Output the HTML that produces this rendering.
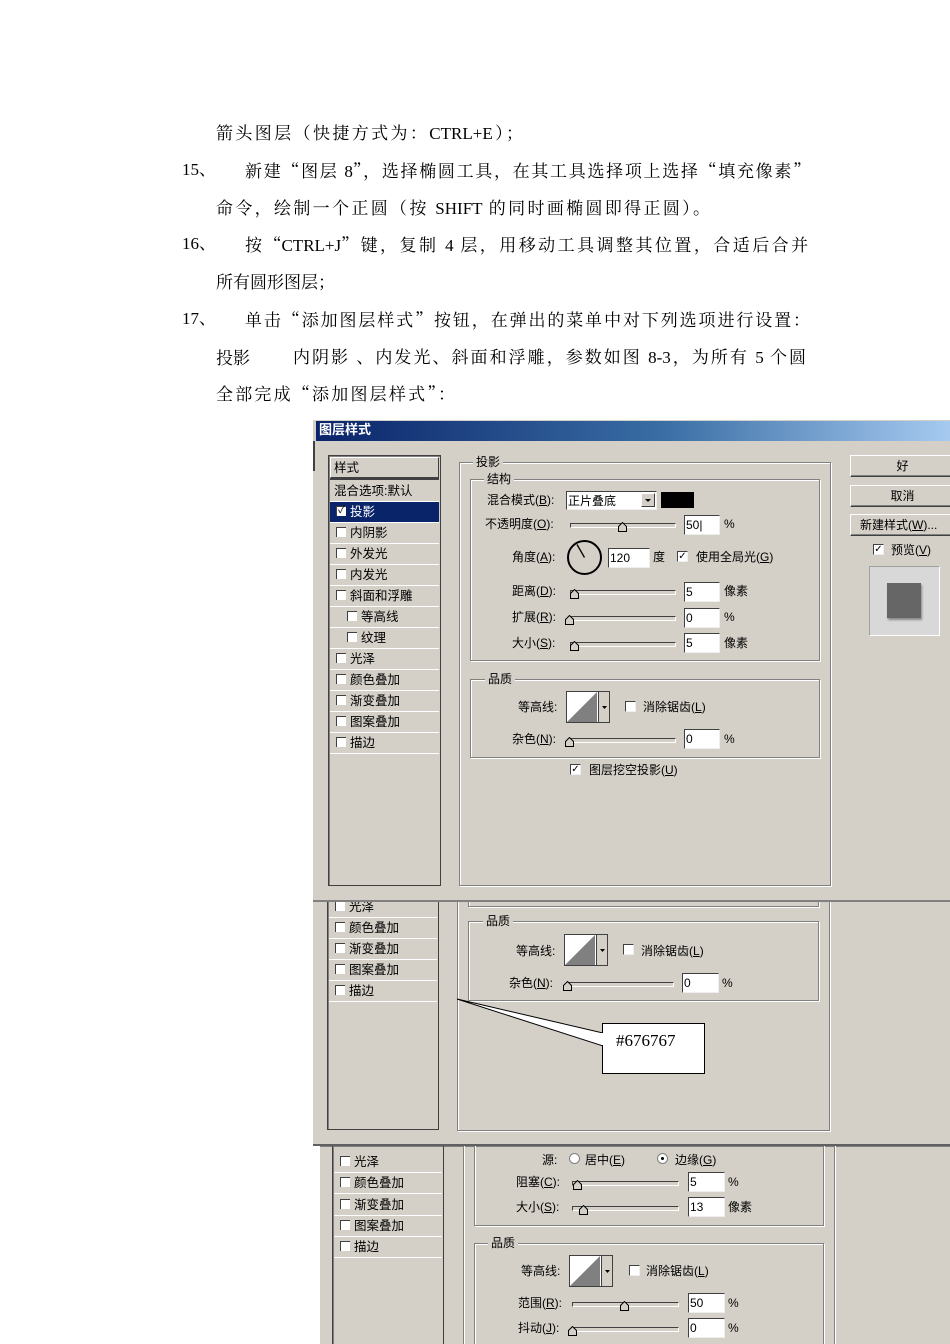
<!DOCTYPE html>
<html style="overflow:hidden;height:1344px"><head><meta charset="utf-8"><style>
*{margin:0;padding:0;box-sizing:border-box}
body{width:950px;height:1344px;background:#fff;position:relative;overflow:hidden;font-family:"Liberation Serif","Noto Serif CJK SC",serif}
.p{position:absolute;font-size:17px;color:#000;white-space:nowrap;line-height:20px}
.j{text-align:justify;text-align-last:justify;white-space:normal;overflow:hidden;height:22px}
.q{font-family:"Noto Serif CJK SC",serif}
.a{position:absolute}
.t{position:absolute;font-family:"Liberation Sans","Noto Sans CJK SC",sans-serif;font-size:12px;line-height:14px;color:#000;white-space:nowrap}
.bg{position:absolute;background:#d4d0c8}
.grp{position:absolute;border:1px solid #808080;box-shadow:1px 1px 0 #fff, inset 1px 1px 0 #fff}
.gl{position:absolute;background:#d4d0c8;padding:0 3px;font-family:"Liberation Sans","Noto Sans CJK SC",sans-serif;font-size:12px;line-height:14px}
.lst{position:absolute;border:1px solid #404040;box-shadow:inset 1px 1px 0 #808080}
.it{position:absolute;left:2px;right:1px;height:21px;border-bottom:1px solid #fff;font-family:"Liberation Sans","Noto Sans CJK SC",sans-serif;font-size:12.5px;line-height:20px;padding-left:20px}
.it i{position:absolute;left:6px;top:4px;width:10px;height:10px;background:#fff;border-top:1px solid #404040;border-left:1px solid #404040;font-style:normal}
.cb{position:absolute;width:11px;height:11px;background:#fff;border-top:1px solid #404040;border-left:1px solid #404040;border-right:1px solid #eee;border-bottom:1px solid #eee;font-size:10px;line-height:9px;text-align:center;font-family:"DejaVu Sans",sans-serif}
.in{position:absolute;height:20px;background:#fff;border-top:1px solid #404040;border-left:1px solid #404040;border-right:1px solid #eee;border-bottom:1px solid #eee;font-family:"Liberation Sans",sans-serif;font-size:12px;line-height:18px;padding-left:1px}
.sl{position:absolute;height:5px;border:1px solid #404040;border-right-color:#fff;border-bottom-color:#fff;background:#d4d0c8}
.th{position:absolute;width:9px;height:10px}
.btn{position:absolute;height:22px;border:1px solid #fff;border-right-color:#404040;border-bottom-color:#404040;box-shadow:inset -1px -1px 0 #808080;text-align:center;font-family:"Liberation Sans","Noto Sans CJK SC",sans-serif;font-size:12px;line-height:20px}
.cont{position:absolute;width:44px;height:32px;border:1px solid #404040;background:#fff}
u{text-decoration:underline}
</style></head><body>

<div class="p j" style="left:216px;top:122px;width:307px">箭头图层<span class="q">（</span>快捷方式为<span class="q">：</span>CTRL+E<span class="q">）；</span></div>
<div class="p" style="left:182px;top:160px">15、</div>
<div class="p j" style="left:245px;top:160px;width:565px">新建<span class="q">“</span>图层 8<span class="q">”，</span>选择椭圆工具<span class="q">，</span>在其工具选择项上选择<span class="q">“</span>填充像素<span class="q">”</span></div>
<div class="p j" style="left:216px;top:197px;width:494px">命令<span class="q">，</span>绘制一个正圆<span class="q">（</span>按 SHIFT 的同时画椭圆即得正圆<span class="q">）。</span></div>
<div class="p" style="left:182px;top:234px">16、</div>
<div class="p j" style="left:245px;top:234px;width:563px">按<span class="q">“</span>CTRL+J<span class="q">”</span>键<span class="q">，</span>复制 4 层<span class="q">，</span>用移动工具调整其位置<span class="q">，</span>合适后合并</div>
<div class="p j" style="left:216px;top:271px;width:119px">所有圆形图层<span class="q">；</span></div>
<div class="p" style="left:182px;top:309px">17、</div>
<div class="p j" style="left:245px;top:309px;width:565px">单击<span class="q">“</span>添加图层样式<span class="q">”</span>按钮<span class="q">，</span>在弹出的菜单中对下列选项进行设置<span class="q">：</span></div>
<div class="p" style="left:216px;top:349px">投影</div>
<div class="p j" style="left:293px;top:346px;width:513px">内阴影 <span class="q">、</span>内发光<span class="q">、</span>斜面和浮雕<span class="q">，</span>参数如图 8-3<span class="q">，</span>为所有 5 个圆</div>
<div class="p j" style="left:216px;top:383px;width:239px">全部完成<span class="q">“</span>添加图层样式<span class="q">”：</span></div>

<!-- ============ Screenshot 3 (bottom) ============ -->
<div class="bg" style="left:320px;top:1146px;width:630px;height:198px"></div>
<div class="a" style="left:320px;top:1144px;width:630px;height:3px;background:#808080"></div>
<div class="lst" style="left:332px;top:1140px;width:112px;height:210px"></div>
<div class="it" style="left:334px;top:1152px;width:108px"><i></i>光泽</div>
<div class="it" style="left:334px;top:1173px;width:108px"><i></i>颜色叠加</div>
<div class="it" style="left:334px;top:1195px;width:108px"><i></i>渐变叠加</div>
<div class="it" style="left:334px;top:1216px;width:108px"><i></i>图案叠加</div>
<div class="it" style="left:334px;top:1237px;width:108px"><i></i>描边</div>
<div class="grp" style="left:463px;top:1130px;width:372px;height:230px"></div>
<div class="grp" style="left:474px;top:1130px;width:350px;height:96px"></div>
<div class="grp" style="left:474px;top:1243px;width:350px;height:120px"></div>
<div class="gl" style="left:488px;top:1236px">品质</div>
<div class="t" style="left:542px;top:1153px">源:</div>
<div class="a" style="left:569px;top:1153px;width:11px;height:11px;border-radius:50%;background:#fff;border:1px solid #808080"></div>
<div class="t" style="left:585px;top:1153px">居中(<u>E</u>)</div>
<div class="a" style="left:657px;top:1153px;width:11px;height:11px;border-radius:50%;background:#fff;border:1px solid #808080"><div style="width:3px;height:3px;background:#000;margin:3px;border-radius:50%"></div></div>
<div class="t" style="left:675px;top:1153px">边缘(<u>G</u>)</div>
<div class="t" style="left:516px;top:1175px">阻塞(<u>C</u>):</div>
<div class="sl" style="left:572px;top:1181px;width:107px"></div>
<svg class="th" style="left:573px;top:1180px" viewBox="0 0 9 10"><path d="M0.5 9.5V4.5L4.5 0.5L8.5 4.5V9.5Z" fill="#d4d0c8" stroke="#000"/></svg>
<div class="in" style="left:688px;top:1172px;width:37px">5</div><div class="t" style="left:728px;top:1175px">%</div>
<div class="t" style="left:516px;top:1200px">大小(<u>S</u>):</div>
<div class="sl" style="left:572px;top:1206px;width:107px"></div>
<svg class="th" style="left:579px;top:1205px" viewBox="0 0 9 10"><path d="M0.5 9.5V4.5L4.5 0.5L8.5 4.5V9.5Z" fill="#d4d0c8" stroke="#000"/></svg>
<div class="in" style="left:688px;top:1197px;width:37px">13</div><div class="t" style="left:728px;top:1200px">像素</div>
<div class="t" style="left:521px;top:1264px">等高线:</div>
<div class="cont" style="left:569px;top:1255px"><svg width="42" height="30" style="position:absolute;left:0;top:0"><path d="M0 30L30 0V30Z" fill="#808080"/><line x1="31.5" y1="0" x2="31.5" y2="30" stroke="#404040"/><rect x="32" y="0" width="10" height="30" fill="#d4d0c8"/><path d="M35 14h5l-2.5 3z" fill="#000"/></svg></div>
<div class="cb" style="left:629px;top:1265px"></div><div class="t" style="left:646px;top:1264px">消除锯齿(<u>L</u>)</div>
<div class="t" style="left:518px;top:1296px">范围(<u>R</u>):</div>
<div class="sl" style="left:572px;top:1302px;width:107px"></div>
<svg class="th" style="left:620px;top:1301px" viewBox="0 0 9 10"><path d="M0.5 9.5V4.5L4.5 0.5L8.5 4.5V9.5Z" fill="#d4d0c8" stroke="#000"/></svg>
<div class="in" style="left:688px;top:1293px;width:37px">50</div><div class="t" style="left:728px;top:1296px">%</div>
<div class="t" style="left:518px;top:1321px">抖动(<u>J</u>):</div>
<div class="sl" style="left:572px;top:1327px;width:107px"></div>
<svg class="th" style="left:568px;top:1326px" viewBox="0 0 9 10"><path d="M0.5 9.5V4.5L4.5 0.5L8.5 4.5V9.5Z" fill="#d4d0c8" stroke="#000"/></svg>
<div class="in" style="left:688px;top:1318px;width:37px">0</div><div class="t" style="left:728px;top:1321px">%</div>

<!-- ============ Screenshot 2 (middle) ============ -->
<div class="bg" style="left:313px;top:900px;width:637px;height:245px"></div>
<div class="a" style="left:313px;top:1144px;width:637px;height:2px;background:#606060"></div>
<div class="lst" style="left:327px;top:895px;width:112px;height:235px"></div>
<div class="it" style="left:329px;top:897px;width:108px"><i></i>光泽</div>
<div class="it" style="left:329px;top:918px;width:108px"><i></i>颜色叠加</div>
<div class="it" style="left:329px;top:939px;width:108px"><i></i>渐变叠加</div>
<div class="it" style="left:329px;top:960px;width:108px"><i></i>图案叠加</div>
<div class="it" style="left:329px;top:981px;width:108px"><i></i>描边</div>
<div class="grp" style="left:457px;top:890px;width:373px;height:241px"></div>
<div class="grp" style="left:468px;top:895px;width:351px;height:12px"></div>
<div class="grp" style="left:468px;top:921px;width:351px;height:80px"></div>
<div class="gl" style="left:483px;top:914px">品质</div>
<div class="t" style="left:516px;top:944px">等高线:</div>
<div class="cont" style="left:564px;top:934px"><svg width="42" height="30" style="position:absolute;left:0;top:0"><path d="M0 30L30 0V30Z" fill="#808080"/><line x1="31.5" y1="0" x2="31.5" y2="30" stroke="#404040"/><rect x="32" y="0" width="10" height="30" fill="#d4d0c8"/><path d="M35 14h5l-2.5 3z" fill="#000"/></svg></div>
<div class="cb" style="left:623px;top:944px"></div><div class="t" style="left:641px;top:944px">消除锯齿(<u>L</u>)</div>
<div class="t" style="left:509px;top:976px">杂色(<u>N</u>):</div>
<div class="sl" style="left:567px;top:982px;width:107px"></div>
<svg class="th" style="left:563px;top:981px" viewBox="0 0 9 10"><path d="M0.5 9.5V4.5L4.5 0.5L8.5 4.5V9.5Z" fill="#d4d0c8" stroke="#000"/></svg>
<div class="in" style="left:682px;top:973px;width:37px">0</div><div class="t" style="left:722px;top:976px">%</div>
<svg class="a" style="left:455px;top:995px" width="260" height="90"><path d="M2 4L148 38L148 51Z" fill="#fff" stroke="#000" stroke-width="1"/><rect x="147.5" y="28.5" width="102" height="50" fill="#fff" stroke="#000"/><rect x="146" y="38" width="4" height="12" fill="#fff"/></svg>
<div class="p" style="left:616px;top:1031px;font-size:17px">#676767</div>

<!-- ============ Screenshot 1 (top) ============ -->
<div class="bg" style="left:313px;top:418px;width:637px;height:482px"></div>
<div class="a" style="left:313px;top:900px;width:637px;height:2px;background:#808080"></div>
<div class="a" style="left:313px;top:418px;width:637px;height:2px;background:#fff"></div>
<div class="a" style="left:316px;top:421px;width:634px;height:20px;background:linear-gradient(90deg,#0a246a 0%,#3a6ea5 55%,#a6caf0 100%)"></div>
<div class="t" style="left:319px;top:423px;color:#fff;font-weight:bold;font-size:13px">图层样式</div>
<div class="a" style="left:313px;top:441px;width:2px;height:30px;background:#404040"></div>
<div class="lst" style="left:328px;top:455px;width:113px;height:431px"></div>
<div class="a" style="left:330px;top:457px;width:109px;height:21px;border:1px solid #fff;border-right-color:#404040;border-bottom-color:#404040"></div>
<div class="t" style="left:334px;top:461px;font-size:12.5px">样式</div>
<div class="a" style="left:330px;top:478px;width:109px;height:2px;background:#404040"></div>
<div class="it" style="left:330px;top:481px;width:109px;padding-left:4px">混合选项:默认</div>
<div class="it" style="left:330px;top:502px;width:109px;background:#0a246a;color:#fff"><i style="font-size:10px;line-height:8px;color:#000;text-align:center">✓</i>投影</div>
<div class="it" style="left:330px;top:523px;width:109px"><i></i>内阴影</div>
<div class="it" style="left:330px;top:544px;width:109px"><i></i>外发光</div>
<div class="it" style="left:330px;top:565px;width:109px"><i></i>内发光</div>
<div class="it" style="left:330px;top:586px;width:109px"><i></i>斜面和浮雕</div>
<div class="it" style="left:330px;top:607px;width:109px;padding-left:31px"><i style="left:17px"></i>等高线</div>
<div class="it" style="left:330px;top:628px;width:109px;padding-left:31px"><i style="left:17px"></i>纹理</div>
<div class="it" style="left:330px;top:649px;width:109px"><i></i>光泽</div>
<div class="it" style="left:330px;top:670px;width:109px"><i></i>颜色叠加</div>
<div class="it" style="left:330px;top:691px;width:109px"><i></i>渐变叠加</div>
<div class="it" style="left:330px;top:712px;width:109px"><i></i>图案叠加</div>
<div class="it" style="left:330px;top:733px;width:109px"><i></i>描边</div>

<div class="grp" style="left:459px;top:462px;width:372px;height:424px"></div>
<div class="gl" style="left:473px;top:455px">投影</div>
<div class="grp" style="left:470px;top:479px;width:350px;height:182px"></div>
<div class="gl" style="left:484px;top:472px">结构</div>
<div class="t" style="left:487px;top:493px">混合模式(<u>B</u>):</div>
<div class="in" style="left:566px;top:491px;width:91px;height:19px">正片叠底<div style="position:absolute;right:1px;top:1px;width:14px;height:14px;background:#d4d0c8;border:1px solid #fff;border-right-color:#404040;border-bottom-color:#404040"><div style="margin:5px 0 0 3px;width:0;height:0;border-left:3px solid transparent;border-right:3px solid transparent;border-top:3px solid #000"></div></div></div>
<div class="a" style="left:661px;top:492px;width:33px;height:16px;background:#000"></div>
<div class="t" style="left:485px;top:517px">不透明度(<u>O</u>):</div>
<div class="sl" style="left:570px;top:523px;width:106px"></div>
<svg class="th" style="left:618px;top:522px" viewBox="0 0 9 10"><path d="M0.5 9.5V4.5L4.5 0.5L8.5 4.5V9.5Z" fill="#d4d0c8" stroke="#000"/></svg>
<div class="in" style="left:684px;top:515px;width:36px">50|</div><div class="t" style="left:724px;top:517px">%</div>
<div class="t" style="left:512px;top:550px">角度(<u>A</u>):</div>
<svg class="a" style="left:566px;top:539px" width="38" height="38"><circle cx="18.5" cy="18.5" r="16.5" fill="none" stroke="#000" stroke-width="2"/><line x1="18.5" y1="18.5" x2="11" y2="5.5" stroke="#000" stroke-width="1.3"/></svg>
<div class="in" style="left:608px;top:548px;width:42px">120</div>
<div class="t" style="left:653px;top:550px">度</div>
<div class="cb" style="left:677px;top:551px">✓</div><div class="t" style="left:696px;top:550px">使用全局光(<u>G</u>)</div>
<div class="t" style="left:512px;top:584px">距离(<u>D</u>):</div>
<div class="sl" style="left:570px;top:590px;width:106px"></div>
<svg class="th" style="left:570px;top:589px" viewBox="0 0 9 10"><path d="M0.5 9.5V4.5L4.5 0.5L8.5 4.5V9.5Z" fill="#d4d0c8" stroke="#000"/></svg>
<div class="in" style="left:684px;top:582px;width:36px">5</div><div class="t" style="left:724px;top:584px">像素</div>
<div class="t" style="left:512px;top:610px">扩展(<u>R</u>):</div>
<div class="sl" style="left:568px;top:616px;width:108px"></div>
<svg class="th" style="left:565px;top:615px" viewBox="0 0 9 10"><path d="M0.5 9.5V4.5L4.5 0.5L8.5 4.5V9.5Z" fill="#d4d0c8" stroke="#000"/></svg>
<div class="in" style="left:684px;top:608px;width:36px">0</div><div class="t" style="left:724px;top:610px">%</div>
<div class="t" style="left:512px;top:636px">大小(<u>S</u>):</div>
<div class="sl" style="left:570px;top:642px;width:106px"></div>
<svg class="th" style="left:570px;top:641px" viewBox="0 0 9 10"><path d="M0.5 9.5V4.5L4.5 0.5L8.5 4.5V9.5Z" fill="#d4d0c8" stroke="#000"/></svg>
<div class="in" style="left:684px;top:633px;width:36px">5</div><div class="t" style="left:724px;top:636px">像素</div>

<div class="grp" style="left:470px;top:679px;width:350px;height:79px"></div>
<div class="gl" style="left:485px;top:672px">品质</div>
<div class="t" style="left:518px;top:700px">等高线:</div>
<div class="cont" style="left:566px;top:691px"><svg width="42" height="30" style="position:absolute;left:0;top:0"><path d="M0 30L30 0V30Z" fill="#808080"/><line x1="31.5" y1="0" x2="31.5" y2="30" stroke="#404040"/><rect x="32" y="0" width="10" height="30" fill="#d4d0c8"/><path d="M35 14h5l-2.5 3z" fill="#000"/></svg></div>
<div class="cb" style="left:625px;top:701px"></div><div class="t" style="left:643px;top:700px">消除锯齿(<u>L</u>)</div>
<div class="t" style="left:512px;top:732px">杂色(<u>N</u>):</div>
<div class="sl" style="left:569px;top:738px;width:107px"></div>
<svg class="th" style="left:565px;top:737px" viewBox="0 0 9 10"><path d="M0.5 9.5V4.5L4.5 0.5L8.5 4.5V9.5Z" fill="#d4d0c8" stroke="#000"/></svg>
<div class="in" style="left:684px;top:729px;width:36px">0</div><div class="t" style="left:724px;top:732px">%</div>
<div class="cb" style="left:570px;top:764px">✓</div><div class="t" style="left:589px;top:763px">图层挖空投影(<u>U</u>)</div>

<div class="btn" style="left:850px;top:455px;width:105px">好</div>
<div class="btn" style="left:850px;top:485px;width:105px">取消</div>
<div class="btn" style="left:850px;top:514px;width:105px;text-align:left;padding-left:9px">新建样式(<u>W</u>)...</div>
<div class="cb" style="left:873px;top:544px">✓</div><div class="t" style="left:891px;top:543px">预览(<u>V</u>)</div>
<div class="a" style="left:869px;top:566px;width:71px;height:70px;background:#d8d8d8;border:1px solid #fff;border-top-color:#a0a0a0;border-left-color:#a0a0a0"></div>
<div class="a" style="left:887px;top:583px;width:34px;height:35px;background:#666;box-shadow:1px 2px 2px #888"></div>
</body></html>
